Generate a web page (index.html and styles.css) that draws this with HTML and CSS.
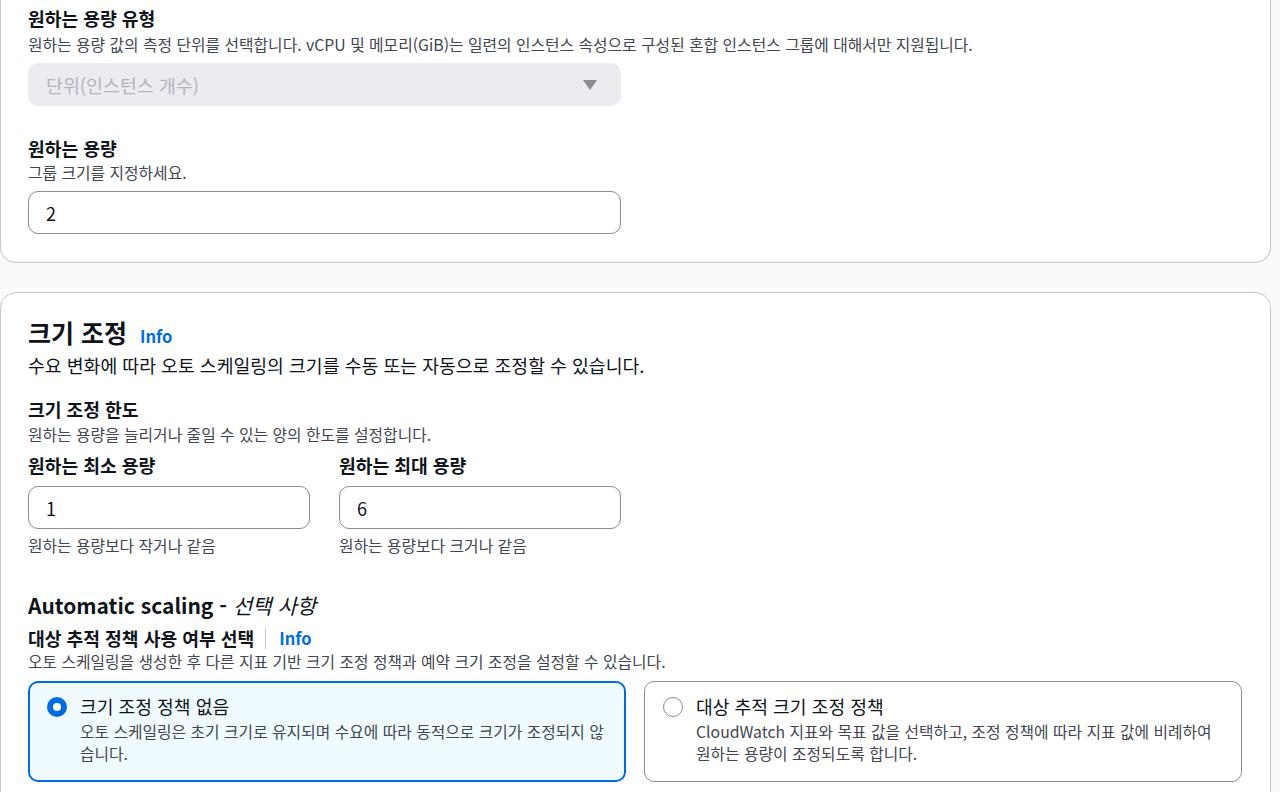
FILE: index.html
```html
<!DOCTYPE html>
<html lang="ko">
<head>
<meta charset="utf-8">
<link rel="stylesheet" href="styles.css">
</head>
<body>
<div class="page">
  <section class="card card-top">
    <div class="label">원하는 용량 유형</div>
    <div class="desc">원하는 용량 값의 측정 단위를 선택합니다. vCPU 및 메모리(GiB)는 일련의 인스턴스 속성으로 구성된 혼합 인스턴스 그룹에 대해서만 지원됩니다.</div>
    <div class="select">
      <span class="select-text">단위(인스턴스 개수)</span>
      <svg class="caret" width="14" height="10" viewBox="0 0 14 10"><path d="M0 0 H14 L7 10 Z" fill="#8c8c94"/></svg>
    </div>
    <div class="label label-gap">원하는 용량</div>
    <div class="desc desc-tight">그룹 크기를 지정하세요.</div>
    <div class="input">2</div>
  </section>

  <section class="card card-second">
    <div class="h2-row">
      <h2 class="h2">크기 조정</h2>
      <a class="info">Info</a>
    </div>
    <div class="h2-desc">수요 변화에 따라 오토 스케일링의 크기를 수동 또는 자동으로 조정할 수 있습니다.</div>

    <div class="label label-limits">크기 조정 한도</div>
    <div class="desc desc-limits">원하는 용량을 늘리거나 줄일 수 있는 양의 한도를 설정합니다.</div>

    <div class="field-grid">
      <div class="field">
        <div class="label">원하는 최소 용량</div>
        <div class="input input-sm">1</div>
        <div class="constraint">원하는 용량보다 작거나 같음</div>
      </div>
      <div class="field">
        <div class="label">원하는 최대 용량</div>
        <div class="input input-sm">6</div>
        <div class="constraint">원하는 용량보다 크거나 같음</div>
      </div>
    </div>

    <h3 class="h3">Automatic scaling - <i>선택 사항</i></h3>
    <div class="label-row">
      <span class="label">대상 추적 정책 사용 여부 선택</span>
      <span class="divider"></span>
      <a class="info info-sm">Info</a>
    </div>
    <div class="desc desc-auto">오토 스케일링을 생성한 후 다른 지표 기반 크기 조정 정책과 예약 크기 조정을 설정할 수 있습니다.</div>

    <div class="tiles">
      <div class="tile tile-selected">
        <span class="radio radio-on"></span>
        <div class="tile-body">
          <div class="tile-title">크기 조정 정책 없음</div>
          <div class="tile-desc">오토 스케일링은 초기 크기로 유지되며 수요에 따라 동적으로 크기가 조정되지 않습니다.</div>
        </div>
      </div>
      <div class="tile">
        <span class="radio"></span>
        <div class="tile-body">
          <div class="tile-title">대상 추적 크기 조정 정책</div>
          <div class="tile-desc">CloudWatch 지표와 목표 값을 선택하고, 조정 정책에 따라 지표 값에 비례하여 원하는 용량이 조정되도록 합니다.</div>
        </div>
      </div>
    </div>
  </section>
</div>
</body>
</html>
```

FILE: styles.css
```css
* { box-sizing: border-box; }
html, body { margin: 0; padding: 0; }
body {
  background: #fafafa;
  font-family: "Noto Sans CJK KR", "Noto Sans", sans-serif;
  color: #0f141a;
  overflow: hidden;
  height: 792px;
}
.page {
  padding-right: 9px;
}
.card {
  background: #ffffff;
  border: 1px solid #c6c6cd;
  border-radius: 16px;
  padding: 0 27px;
}
.card-top {
  border-top: none;
  border-radius: 0 0 16px 16px;
  padding-top: 6px;
  padding-bottom: 28px;
}
.card-second {
  margin-top: 29px;
  padding-top: 23px;
  padding-bottom: 40px;
}
.label {
  font-size: 18.2px;
  font-weight: 700;
  line-height: 24px;
  color: #0f141a;
}
.desc {
  font-size: 15.8px;
  line-height: 20px;
  color: #424650;
  margin-top: 5px;
}
.select {
  margin-top: 8px;
  width: 593px;
  height: 43px;
  background: #ebebf0;
  border-radius: 10px;
  display: flex;
  align-items: center;
  justify-content: space-between;
  padding: 0 24px 0 18px;
}
.select-text {
  font-size: 18.4px;
  color: #b4b4bb;
}
.label-gap { margin-top: 30px; }
.desc-tight { margin-top: 3px; }
.input {
  margin-top: 8px;
  width: 593px;
  height: 43px;
  border: 1px solid #8c8c94;
  border-radius: 10px;
  display: flex;
  align-items: center;
  padding-left: 17px;
  font-size: 18px;
  color: #0f141a;
}
.h2-row {
  display: flex;
  align-items: baseline;
  gap: 13px;
  height: 32px;
}
.h2 {
  margin: 0;
  font-size: 25px;
  line-height: 32px;
  font-weight: 700;
}
.info {
  color: #006ce0;
  font-weight: 700;
  font-size: 16.5px;
  text-decoration: none;
}
.h2-desc {
  margin-top: 5px;
  font-size: 18.3px;
  line-height: 24px;
  color: #0f141a;
}
.label-limits { margin-top: 20px; }
.desc-limits { margin-top: 4px; }
.field-grid {
  margin-top: 8px;
  display: grid;
  grid-template-columns: 282px 282px;
  column-gap: 29px;
}
.input-sm {
  width: 282px;
  margin-top: 9px;
}
.constraint {
  margin-top: 7px;
  font-size: 15.8px;
  line-height: 20px;
  color: #424650;
}
.h3 {
  margin: 35px 0 0;
  font-size: 21px;
  line-height: 28px;
  font-weight: 700;
}
.h3 i { font-weight: 400; }
.label-row {
  margin-top: 7px;
  display: flex;
  align-items: center;
  height: 24px;
}
.divider {
  width: 1px;
  height: 21px;
  background: #c6c6cd;
  margin: 0 13px 0 11px;
}
.info-sm { font-size: 16.5px; line-height: 24px; }
.desc-auto { margin-top: 2px; }
.tiles {
  margin-top: 9px;
  display: grid;
  grid-template-columns: 598px 598px;
  column-gap: 18px;
}
.tile {
  height: 101px;
  border: 1px solid #8c8c94;
  border-radius: 10px;
  display: flex;
  align-items: flex-start;
  padding: 12px 16px 0 18px;
  background: #fff;
}
.tile-selected {
  border: 2px solid #006ce0;
  background: #f0fbff;
  padding: 11px 16px 0 17px;
}
.radio {
  flex: none;
  width: 20px;
  height: 20px;
  border-radius: 50%;
  border: 1.5px solid #8c8c94;
  margin-top: 3px;
  margin-right: 13px;
  background: #fff;
}
.radio-on {
  border: 6px solid #006ce0;
}
.tile-body { flex: 1; }
.tile-title {
  font-size: 18.2px;
  line-height: 24px;
  color: #0f141a;
}
.tile-desc {
  margin-top: 3px;
  font-size: 15.8px;
  line-height: 22px;
  color: #424650;
}
```
